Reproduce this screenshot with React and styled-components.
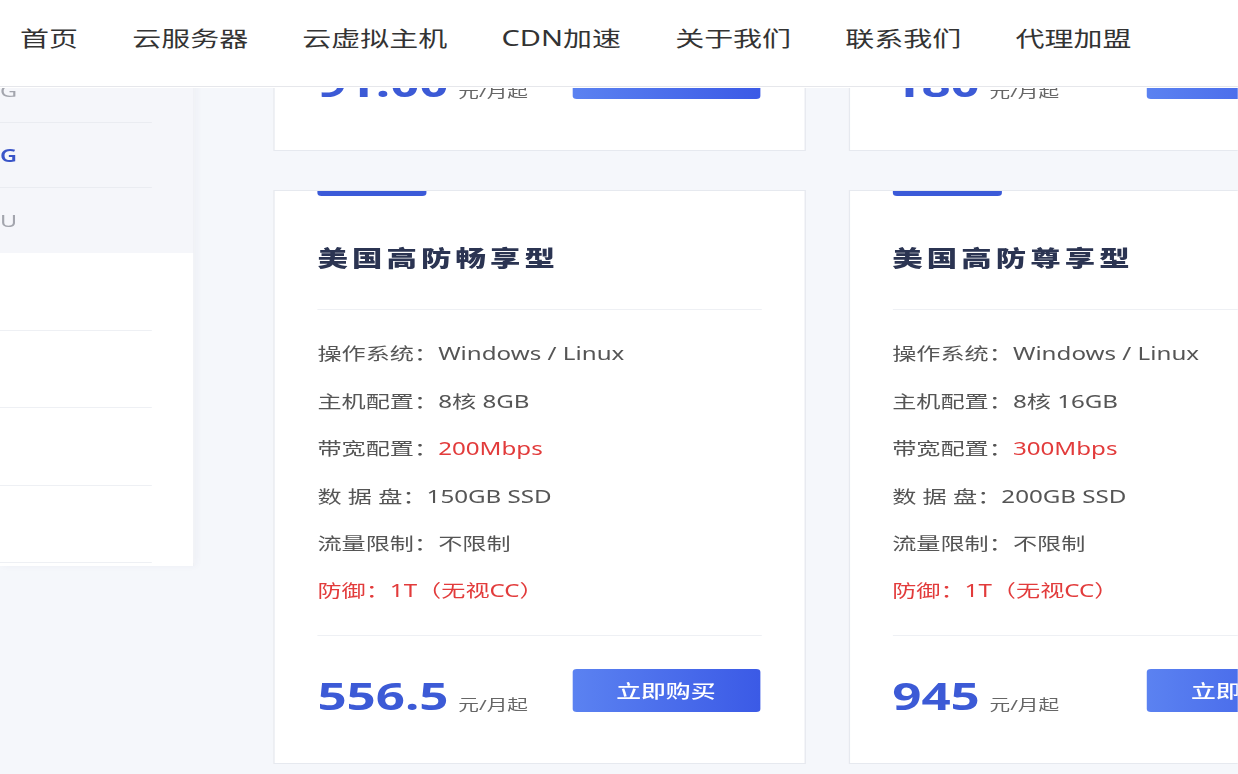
import { useLayoutEffect, useRef } from "react";
import styled, { createGlobalStyle } from "styled-components";

// the shot is stretched sideways, so the page is laid out narrow and widened
const STRETCH = 1.38;

const GlobalStyle = createGlobalStyle`
  html, body {
    margin: 0;
    padding: 0;
    overflow: hidden;
    background: #f5f7fb;
  }
  * {
    box-sizing: border-box;
  }
  body {
    font-family: "Noto Sans", "Noto Sans CJK SC", sans-serif;
  }
`;

const Stage = styled.div`
  width: ${1238 / STRETCH}px;
  height: 774px;
  display: flex;
  flex-direction: column;
  overflow: hidden;
  background: #f5f7fb;
  transform: scaleX(${STRETCH});
  transform-origin: 0 0;
`;

const Header = styled.header`
  position: relative;
  z-index: 1;
  flex: none;
  height: 87px;
  display: flex;
  align-items: center;
  gap: 39.3px;
  padding: 0 0 10px 14.5px;
  background: #fff;
  border-bottom: 1px solid #e6e7eb;
`;

const NavLink = styled.a`
  font-size: 21px;
  line-height: 1;
  color: #333;
  text-decoration: none;
  white-space: nowrap;
`;

const ScrollArea = styled.div`
  flex: 1;
  min-height: 0;
  overflow: hidden;
`;

const Main = styled.main`
  display: flex;
  align-items: flex-start;
  gap: 57px;
  padding: 40px 0 80px;
`;

const Sidebar = styled.aside`
  flex: none;
  width: 141px;
  padding-bottom: 3px;
  background: #fff;
  border-right: 1px solid #eceef3;
  box-shadow: 2px 0 6px rgba(40, 60, 110, 0.04);
`;

const SideRow = styled.div`
  background: ${(p) => (p.$sub ? "#f5f6fa" : "#fff")};
`;

const SideItem = styled.div`
  width: 110px;
  height: ${(p) => (p.$sub ? "65px" : "77.5px")};
  display: flex;
  align-items: center;
  font-size: 17px;
  font-weight: ${(p) => (p.$active ? 600 : 400)};
  color: ${(p) => (p.$active ? "#3a55c8" : "#a3a5ad")};
  border-bottom: 1px solid ${(p) => (p.$sub ? "#eaecf1" : "#eef0f4")};
  ${(p) => (p.$last ? "border-bottom-color: transparent;" : "")}
`;

const Grid = styled.section`
  flex: none;
  display: grid;
  grid-template-columns: repeat(2, 385.5px);
  gap: 39px 31px;
`;

const Card = styled.div`
  background: #fff;
  border: 1px solid #e6e9ef;
  padding: 0 31px;
`;

const Accent = styled.div`
  width: 79px;
  height: 5px;
  background: #3b5ad8;
  border-radius: 0 0 3px 3px;
`;

const Title = styled.h3`
  margin: 0;
  padding: 46px 0 37px;
  font-size: 22px;
  line-height: 30px;
  font-weight: 800;
  letter-spacing: 3px;
  color: #2b3452;
  border-bottom: 1px solid #eef0f4;
`;

const Specs = styled.ul`
  list-style: none;
  margin: 0;
  padding: 20px 0;
  border-bottom: 1px solid #eef0f4;
`;

const Spec = styled.li`
  font-size: 17.5px;
  line-height: 47.4px;
  white-space: nowrap;
  color: ${(p) => (p.$danger ? "#e23b3b" : "#555")};
`;

const Hot = styled.span`
  color: #e23b3b;
`;

const PriceRow = styled.div`
  display: flex;
  align-items: flex-end;
  justify-content: space-between;
  padding: 33px 0 51px;
`;

const Price = styled.div`
  display: flex;
  align-items: baseline;
  gap: 7px;
  margin-bottom: -2px;
`;

const Amount = styled.span`
  font-size: 37px;
  line-height: 1;
  font-weight: 700;
  color: #3c5ad6;
`;

const Unit = styled.span`
  font-size: 15px;
  color: #666;
`;

const BuyButton = styled.button`
  width: 136px;
  height: 43px;
  margin-right: 1px;
  border: none;
  border-radius: 3px;
  background: linear-gradient(90deg, #5b82f1, #3b5ae6);
  color: #fff;
  font-family: inherit;
  font-size: 18px;
  font-weight: 500;
  cursor: pointer;
`;

const navItems = ["首页", "云服务器", "云虚拟主机", "CDN加速", "关于我们", "联系我们", "代理加盟"];

const subItems = [
  { label: "G" },
  { label: "G" },
  { label: "G" },
  { label: "G" },
  { label: "G" },
  { label: "G" },
  { label: "G", active: true },
  { label: "U" },
];

const plans = [
  { name: "美国高防基础型", core: "4核 4GB", bw: "100Mbps", disk: "100GB SSD", price: "91.00" },
  { name: "美国高防标准型", core: "4核 8GB", bw: "150Mbps", disk: "120GB SSD", price: "180" },
  { name: "美国高防畅享型", core: "8核 8GB", bw: "200Mbps", disk: "150GB SSD", price: "556.5" },
  { name: "美国高防尊享型", core: "8核 16GB", bw: "300Mbps", disk: "200GB SSD", price: "945" },
];

function PlanCard({ plan, cardRef }) {
  return (
    <Card ref={cardRef}>
      <Accent />
      <Title>{plan.name}</Title>
      <Specs>
        <Spec>操作系统：Windows / Linux</Spec>
        <Spec>主机配置：{plan.core}</Spec>
        <Spec>
          带宽配置：<Hot>{plan.bw}</Hot>
        </Spec>
        <Spec>数 据 盘：{plan.disk}</Spec>
        <Spec>流量限制：不限制</Spec>
        <Spec $danger>防御：1T（无视CC）</Spec>
      </Specs>
      <PriceRow>
        <Price>
          <Amount>{plan.price}</Amount>
          <Unit>元/月起</Unit>
        </Price>
        <BuyButton>立即购买</BuyButton>
      </PriceRow>
    </Card>
  );
}

export default function App() {
  const areaRef = useRef(null);
  const targetRef = useRef(null);

  useLayoutEffect(() => {
    const area = areaRef.current;
    const card = targetRef.current;
    if (!area || !card) return;
    const offset = card.getBoundingClientRect().top - area.getBoundingClientRect().top + area.scrollTop;
    // second row of cards sits 103px below the header line
    area.scrollTop = offset - 103;
  }, []);

  return (
    <>
      <GlobalStyle />
      <Stage>
        <Header>
          {navItems.map((item) => (
            <NavLink key={item} href="#">
              {item}
            </NavLink>
          ))}
        </Header>
        <ScrollArea ref={areaRef}>
          <Main>
            <Sidebar>
              <SideRow>
                <SideItem />
              </SideRow>
              <SideRow>
                <SideItem />
              </SideRow>
              {subItems.map((s, i) => (
                <SideRow key={i} $sub>
                  <SideItem $sub $active={s.active} $last={i === subItems.length - 1}>
                    {s.label}
                  </SideItem>
                </SideRow>
              ))}
              {[0, 1, 2, 3].map((i) => (
                <SideRow key={"top" + i}>
                  <SideItem />
                </SideRow>
              ))}
            </Sidebar>
            <Grid>
              {plans.map((plan, i) => (
                <PlanCard key={plan.name} plan={plan} cardRef={i === 2 ? targetRef : undefined} />
              ))}
            </Grid>
          </Main>
        </ScrollArea>
      </Stage>
    </>
  );
}
